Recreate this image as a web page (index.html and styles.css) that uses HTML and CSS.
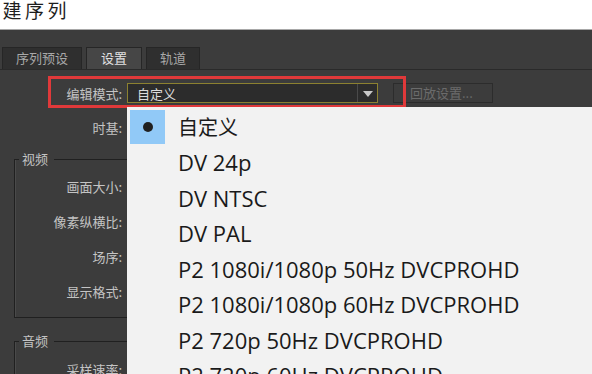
FILE: index.html
```html
<!DOCTYPE html>
<html lang="zh-CN">
<head>
    <meta charset="UTF-8">
    <title>新建序列</title>
    <link rel="stylesheet" href="styles.css">
</head>
<body>

    <div class="title-bar">新建序列</div>

    <div class="panel">
        <!-- Tabs -->
        <div class="tabs">
            <div class="tab">序列预设</div>
            <div class="tab active">设置</div>
            <div class="tab">轨道</div>
        </div>

        <div class="tab-body">
            <div class="row">
                <div class="label">编辑模式:</div>
                <div class="select">
                    <span class="select-value">自定义</span>
                    <span class="select-arrow"></span>
                </div>
                <div class="btn disabled">回放设置...</div>
            </div>

            <div class="row">
                <div class="label">时基:</div>
            </div>

            <fieldset class="group">
                <legend>视频</legend>
                <div class="row"><div class="label">画面大小:</div></div>
                <div class="row"><div class="label">像素纵横比:</div></div>
                <div class="row"><div class="label">场序:</div></div>
                <div class="row"><div class="label">显示格式:</div></div>
            </fieldset>

            <fieldset class="group">
                <legend>音频</legend>
                <div class="row"><div class="label">采样速率:</div></div>
            </fieldset>

            <!-- Red annotation around the edit mode row -->
            <div class="highlight"></div>

            <!-- Open dropdown list -->
            <ul class="menu">
                <li class="checked"><span class="check"><span class="dot"></span></span>自定义</li>
                <li><span class="check"></span>DV 24p</li>
                <li><span class="check"></span>DV NTSC</li>
                <li><span class="check"></span>DV PAL</li>
                <li><span class="check"></span>P2 1080i/1080p 50Hz DVCPROHD</li>
                <li><span class="check"></span>P2 1080i/1080p 60Hz DVCPROHD</li>
                <li><span class="check"></span>P2 720p 50Hz DVCPROHD</li>
                <li><span class="check"></span>P2 720p 60Hz DVCPROHD</li>
            </ul>
        </div>
    </div>

</body>
</html>
```

FILE: styles.css
```css
body {
    margin: 0;
    width: 592px;
    height: 374px;
    overflow: hidden;
    font-family: "Noto Sans CJK SC", sans-serif;
    background-color: #3c3c3c;
}

.title-bar {
    height: 30px;
    background-color: #ffffff;
    border-bottom: 1px solid #a8a8a8;
    box-sizing: border-box;
    margin-left: -20px;
    font-size: 19px;
    letter-spacing: 3.5px;
    line-height: 20px;
    color: #1e1e1e;
}

.panel {
    background-color: #3c3c3c;
    height: 344px;
    overflow: hidden;
}

.tabs {
    display: flex;
    gap: 4px;
    padding: 17px 0 0 2px;
    height: 22px;
}
.tab {
    height: 22px;
    box-sizing: border-box;
    padding: 0 13px;
    background-color: #2f2f2f;
    border: 1px solid #262626;
    border-bottom: none;
    color: #a8a8a8;
    font-size: 13px;
    line-height: 20px;
}
.tab.active {
    background-color: #464646;
    color: #e2e2e2;
    padding: 0 14px;
}

.tab-body {
    position: relative;
    border-top: 1px solid #2a2a2a;
    padding-top: 13px;
    height: 291px;
}

.row {
    display: flex;
    align-items: center;
    height: 20px;
    margin-bottom: 14px;
}
.label {
    width: 122px;
    text-align: right;
    color: #c4c4c4;
    font-size: 13px;
    flex-shrink: 0;
}

.select {
    margin-left: 5px;
    width: 251px;
    height: 20px;
    box-sizing: border-box;
    border: 1px solid #8c8130;
    background-color: #2c2c2c;
    display: flex;
    align-items: center;
}
.select-value {
    flex: 1;
    padding-left: 9px;
    color: #dcdcdc;
    font-size: 13px;
}
.select-arrow {
    width: 19px;
    height: 18px;
    border-left: 1px solid #4a4a4a;
    position: relative;
}
.select-arrow::after {
    content: '';
    position: absolute;
    left: 5px;
    top: 7px;
    border-left: 5px solid transparent;
    border-right: 5px solid transparent;
    border-top: 6px solid #c8c8c8;
}

.btn {
    margin-left: 15px;
    width: 100px;
    height: 20px;
    box-sizing: border-box;
    border: 1px solid #2c2c2c;
    color: #6b6b6b;
    font-size: 13px;
    line-height: 18px;
    padding-left: 16px;
}

.group {
    margin: 2px 0 0 14px;
    padding: 9px 0 1px 0;
    border: 1px solid #202020;
    border-right: none;
    box-shadow: inset 1px 0 0 #4a4a4a;
    min-width: 0;
}
.group legend {
    margin-left: 4px;
    padding: 0 6px 0 3px;
    color: #c4c4c4;
    font-size: 13px;
    line-height: 16px;
}
.group .label { width: 107px; }
.group .row { margin-bottom: 15px; }
.group + .group { margin-top: 15px; padding-top: 10px; }

.highlight {
    position: absolute;
    left: 48px;
    top: 6px;
    width: 358px;
    height: 32px;
    box-sizing: border-box;
    border: 3px solid #e0393a;
}

.menu {
    position: absolute;
    left: 127px;
    top: 37px;
    right: 0;
    bottom: 0;
    margin: 0;
    padding: 2px 0 0 3px;
    list-style: none;
    background-color: #f2f2f2;
}
.menu li {
    display: flex;
    align-items: center;
    height: 35.5px;
    font-family: "Open Sans", sans-serif;
    font-size: 22px;
    color: #1a1a1a;
    white-space: nowrap;
}
.menu li.checked { font-family: "Noto Sans CJK SC", sans-serif; font-size: 20px; }
.check {
    width: 35px;
    height: 34px;
    margin-right: 13px;
    flex-shrink: 0;
    display: flex;
    align-items: center;
    justify-content: center;
}
.checked .check { background-color: #91c9f7; }
.dot {
    width: 10px;
    height: 10px;
    border-radius: 50%;
    background-color: #202020;
}
```
